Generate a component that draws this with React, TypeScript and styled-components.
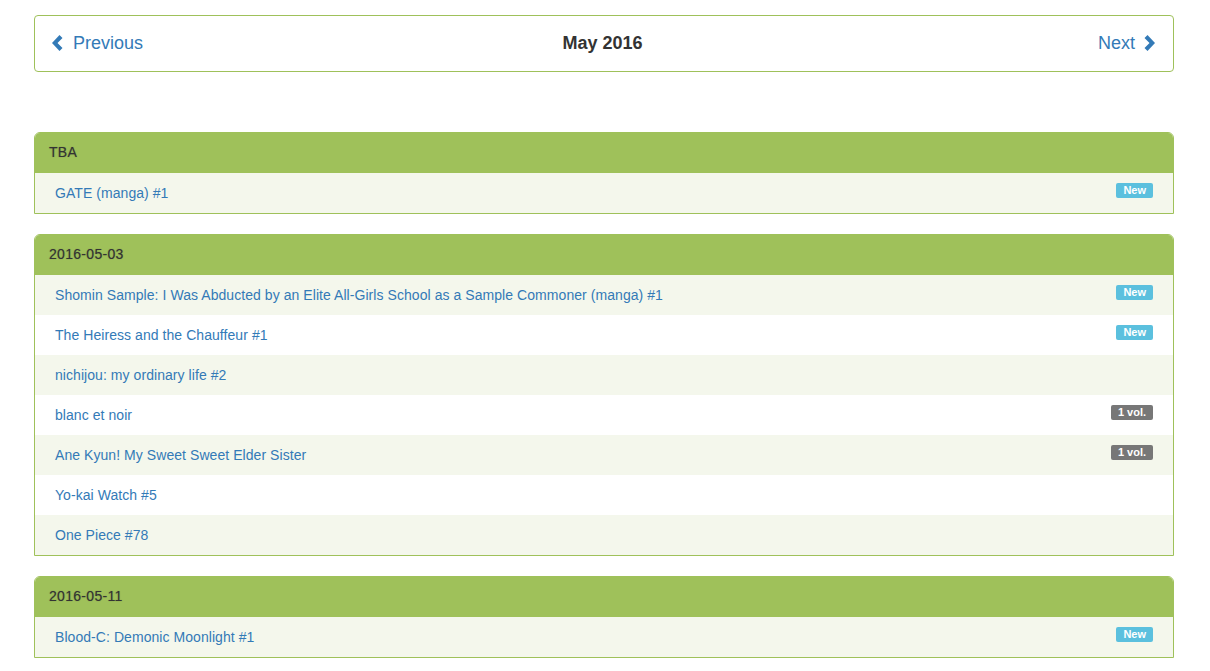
import React from "react";
import styled, { createGlobalStyle } from "styled-components";

const Global = createGlobalStyle`
  html, body { margin: 0; padding: 0; background: #fff; }
  body {
    font-family: "Liberation Sans", Arial, sans-serif;
    font-size: 14px;
    line-height: 20px;
    color: #333;
  }
`;

const Container = styled.div`
  width: 1140px;
  margin: 0 auto;
  padding-top: 15px;
  transform: translateX(-1px);
`;

const Pager = styled.div`
  display: flex;
  align-items: center;
  justify-content: space-between;
  height: 53px;
  border: 1px solid #9fc15a;
  border-radius: 4px;
  padding: 0 18px 2px 17px;
  margin-bottom: 60px;
`;

const PagerLink = styled.a<{ $right?: boolean }>`
  display: flex;
  align-items: center;
  gap: ${(p) => (p.$right ? "9px" : "10px")};
  color: #337ab7;
  font-size: 18px;
  text-decoration: none;
  width: 200px;
  justify-content: ${(p) => (p.$right ? "flex-end" : "flex-start")};
`;

const Title = styled.div`
  font-size: 18px;
  font-weight: bold;
  color: #333;
  margin-right: 2px;
`;

const Panel = styled.div`
  border: 1px solid #9fc15a;
  border-radius: 6px 6px 0 0;
  margin-bottom: 20px;
  overflow: hidden;
`;

const Heading = styled.div`
  background: #9fc15a;
  padding: 9px 14px 11px;
  height: 20px;
  font-size: 14px;
  letter-spacing: 0.3px;
  color: #333;
  text-shadow: 0 0 1px rgba(40, 40, 40, 0.45);
`;

const Row = styled.div<{ $odd: boolean }>`
  display: flex;
  justify-content: space-between;
  align-items: flex-start;
  padding: 10px 20px;
  height: 20px;
  background: ${(p) => (p.$odd ? "#f4f7ec" : "#fff")};
`;

const ItemLink = styled.a`
  color: #337ab7;
  text-decoration: none;
  font-size: 14px;
  letter-spacing: 0.06px;
`;

const Badge = styled.span<{ $kind: "new" | "vol" }>`
  display: inline-block;
  padding: 0 7px;
  height: 15px;
  line-height: 15px;
  font-size: 11px;
  font-weight: bold;
  color: #fff;
  border-radius: 2px;
  background: ${(p) => (p.$kind === "new" ? "#5bc0de" : "#777")};
`;

const Chevron = ({ dir }: { dir: "left" | "right" }) => (
  <svg width="11" height="16" viewBox="0 0 11 16">
    {dir === "left" ? (
      <polygon points="7.5,0 10.5,3 5.5,8 10.5,13 7.5,16 0,8" fill="#337ab7" />
    ) : (
      <polygon points="3.5,0 11,8 3.5,16 0.5,13 5.5,8 0.5,3" fill="#337ab7" />
    )}
  </svg>
);

type Item = { title: string; badge?: "new" | "vol" };

const groups: { date: string; items: Item[] }[] = [
  { date: "TBA", items: [{ title: "GATE (manga) #1", badge: "new" }] },
  {
    date: "2016-05-03",
    items: [
      { title: "Shomin Sample: I Was Abducted by an Elite All-Girls School as a Sample Commoner (manga) #1", badge: "new" },
      { title: "The Heiress and the Chauffeur #1", badge: "new" },
      { title: "nichijou: my ordinary life #2" },
      { title: "blanc et noir", badge: "vol" },
      { title: "Ane Kyun! My Sweet Sweet Elder Sister", badge: "vol" },
      { title: "Yo-kai Watch #5" },
      { title: "One Piece #78" },
    ],
  },
  { date: "2016-05-11", items: [{ title: "Blood-C: Demonic Moonlight #1", badge: "new" }] },
];

export default function App() {
  return (
    <>
      <Global />
      <Container>
        <Pager>
          <PagerLink href="#">
            <Chevron dir="left" />
            Previous
          </PagerLink>
          <Title>May 2016</Title>
          <PagerLink href="#" $right>
            Next
            <Chevron dir="right" />
          </PagerLink>
        </Pager>
        {groups.map((g) => (
          <Panel key={g.date}>
            <Heading>{g.date}</Heading>
            {g.items.map((it, i) => (
              <Row key={it.title} $odd={i % 2 === 0}>
                <ItemLink href="#">{it.title}</ItemLink>
                {it.badge && <Badge $kind={it.badge}>{it.badge === "new" ? "New" : "1 vol."}</Badge>}
              </Row>
            ))}
          </Panel>
        ))}
      </Container>
    </>
  );
}
